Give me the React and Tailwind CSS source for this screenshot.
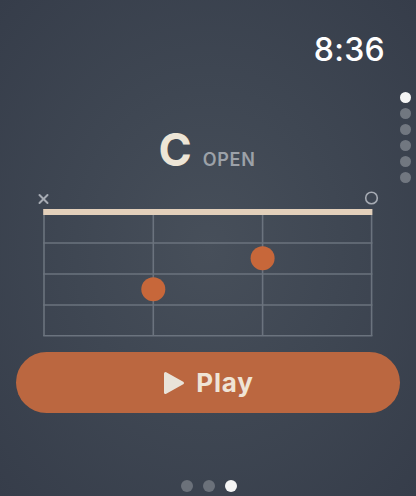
export default function App() {
  const font = { fontFamily: 'Inter, "Noto Sans", sans-serif' };
  return (
    <div
      className="relative w-[416px] h-[496px] overflow-hidden flex flex-col bg-[radial-gradient(ellipse_at_center,#474f5a_0%,#3f4753_45%,#363d4a_100%)]"
      style={font}
    >
      {/* time */}
      <div className="pt-[34px] pr-[31px] flex justify-end">
        <span className="text-[32px] leading-[32px] font-medium text-white tracking-[0.3px]">8:36</span>
      </div>

      {/* side page dots */}
      <div className="absolute right-[5px] top-[92px] flex flex-col gap-[5px]">
        <span className="w-[11px] h-[11px] rounded-full bg-[#f5f5f5]" />
        <span className="w-[11px] h-[11px] rounded-full bg-[#717780]" />
        <span className="w-[11px] h-[11px] rounded-full bg-[#717780]" />
        <span className="w-[11px] h-[11px] rounded-full bg-[#717780]" />
        <span className="w-[11px] h-[11px] rounded-full bg-[#717780]" />
        <span className="w-[11px] h-[11px] rounded-full bg-[#717780]" />
      </div>

      {/* title */}
      <div className="mt-[61px] flex items-baseline justify-center gap-[11px] pr-[2px]">
        <span className="text-[45px] leading-[46px] font-bold text-[#ede5d6]">C</span>
        <span className="text-[18px] leading-none font-semibold text-[#9ca1a8] tracking-[0.7px]">OPEN</span>
      </div>

      {/* chord diagram */}
      <div className="mt-[12px] h-[160px]">
        <svg width="416" height="160" viewBox="0 0 416 160">
          <g stroke="#a6abb3" strokeWidth="2" strokeLinecap="round">
            <line x1="39.5" y1="10" x2="47.5" y2="18" />
            <line x1="47.5" y1="10" x2="39.5" y2="18" />
          </g>
          <circle cx="371.5" cy="13" r="5.8" fill="none" stroke="#a6abb3" strokeWidth="1.6" />
          <g stroke="#6b737e" strokeWidth="1.6">
            <line x1="44" y1="30" x2="44" y2="151" />
            <line x1="153.3" y1="30" x2="153.3" y2="151" />
            <line x1="262.6" y1="30" x2="262.6" y2="151" />
            <line x1="371.6" y1="30" x2="371.6" y2="151" />
            <line x1="43.2" y1="58" x2="372.4" y2="58" />
            <line x1="43.2" y1="89" x2="372.4" y2="89" />
            <line x1="43.2" y1="120" x2="372.4" y2="120" />
            <line x1="43.2" y1="150.8" x2="372.4" y2="150.8" />
          </g>
          <rect x="43.2" y="24" width="329.2" height="6" fill="#e3d0bb" />
          <circle cx="153.3" cy="104.3" r="12" fill="#c7673a" />
          <circle cx="262.6" cy="73.3" r="12" fill="#c7673a" />
        </svg>
      </div>

      {/* play button */}
      <div className="mt-[7px] px-[16px]">
        <button className="w-full h-[61px] rounded-full bg-[#bb6740] flex items-center justify-center gap-[11px] pl-[1px]">
          <svg width="22" height="24" viewBox="0 0 22 24">
            <path d="M2.5 2.5 L19.5 12 L2.5 21.5 Z" fill="#e9e3d9" stroke="#e9e3d9" strokeWidth="3" strokeLinejoin="round" />
          </svg>
          <span className="text-[26px] leading-none font-bold text-[#efe4d6] tracking-[0.8px]">Play</span>
        </button>
      </div>

      {/* bottom page dots */}
      <div className="mt-[67px] flex justify-center gap-[10px] pl-[1px]">
        <span className="w-[12px] h-[12px] rounded-full bg-[#6b717a]" />
        <span className="w-[12px] h-[12px] rounded-full bg-[#6b717a]" />
        <span className="w-[12px] h-[12px] rounded-full bg-[#f5f5f5]" />
      </div>
    </div>
  );
}
